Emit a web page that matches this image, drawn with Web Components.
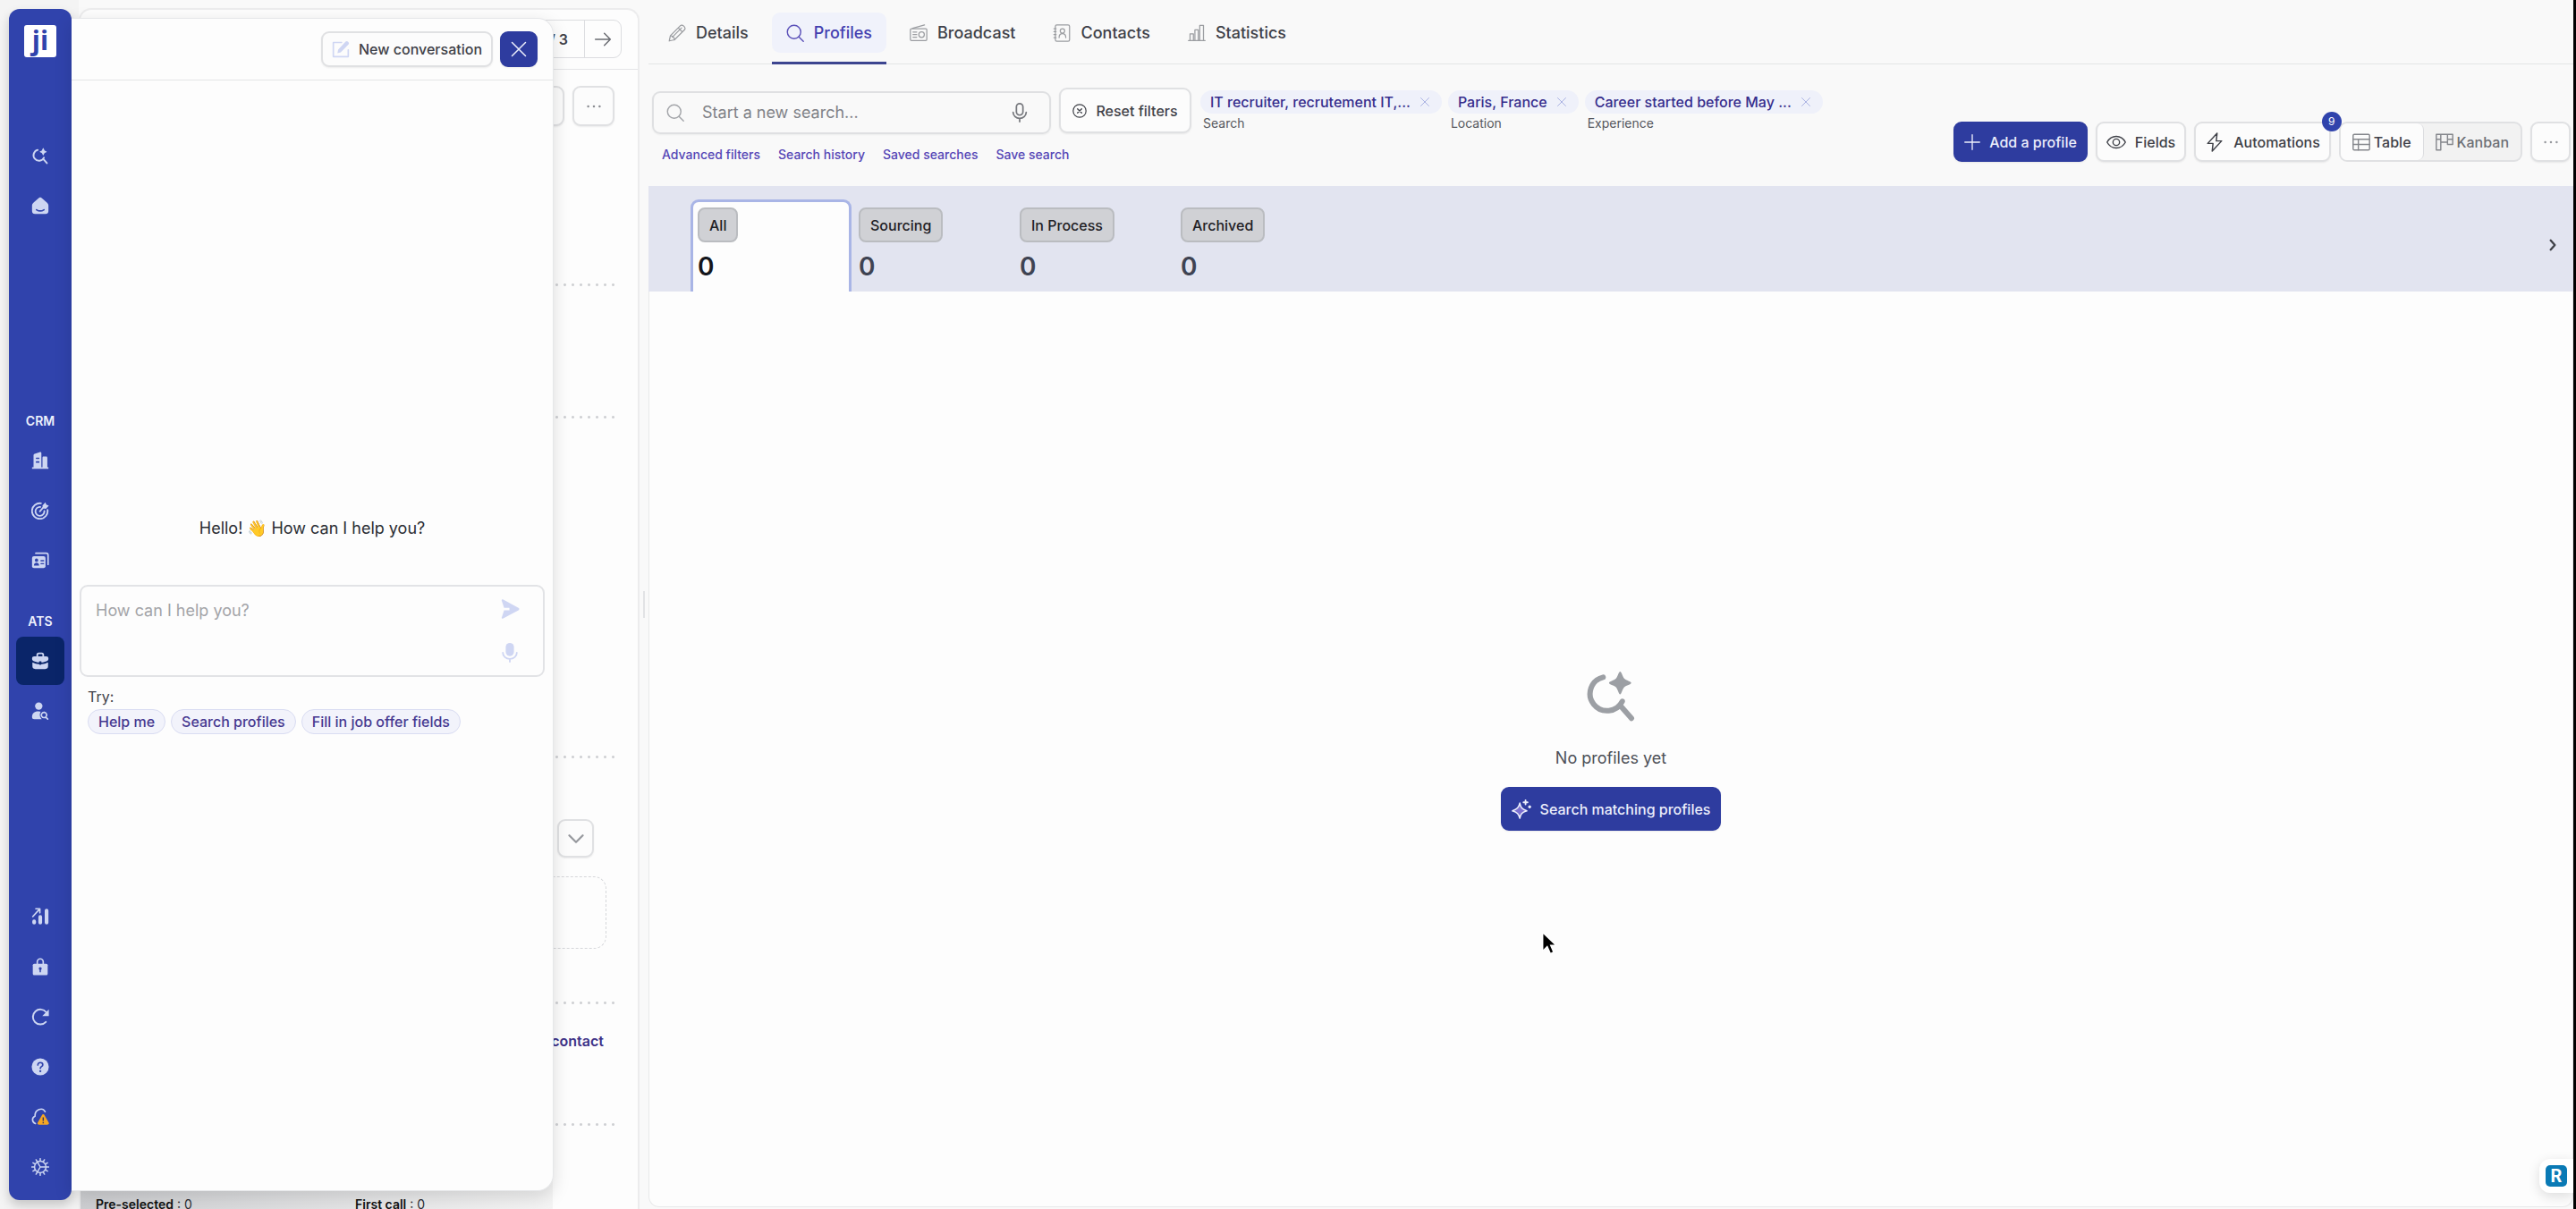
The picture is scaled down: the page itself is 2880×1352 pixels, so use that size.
<!DOCTYPE html>
<html lang="en">
<head>
<meta charset="utf-8">
<title>Profiles</title>
<style>
    body {
        margin: 0;
        font-family: Inter, "Liberation Sans", sans-serif;
        font-size: 16px;
        line-height: 20px;
        color: #3f4148;
        background: #f9f9f9;
    }
</style>
</head>
<body>
<app-shell>
    <app-sidebar slot="sidebar"></app-sidebar>
    <job-panel slot="job"></job-panel>
    <chat-panel slot="chat"></chat-panel>
    <profiles-page slot="page"></profiles-page>
</app-shell>

<script>
const stroke = 'fill="none" stroke="currentColor" stroke-linecap="round" stroke-linejoin="round"';

const ICONS = {
    'search-star': ['0 0 56 62', `
        <path ${stroke} stroke-width="6" d="M19.3 11.3A19 19 0 1 0 40.7 38.3M38.7 43.3L51 57.3"/>
        <path fill="currentColor" d="M38.3 5c1.6 0 2.6 5.5 4.6 7.8s7.8 3.2 7.8 4.9-5.6 2.6-7.8 4.8-3 7.9-4.6 7.9-2.5-5.6-4.6-7.9-7.8-3.1-7.8-4.8 5.7-2.6 7.8-4.9S36.7 5 38.3 5z"/>`],
    home: ['0 0 24 24', `
        <path fill="currentColor" d="M12 1c1 0 2 .6 3.4 1.9l5.2 4.6C22.2 9 23 10 23 12v7c0 3-1 4-4 4H5c-3 0-4-1-4-4v-7c0-2 .8-3 2.4-4.5l5.2-4.6C10 1.6 11 1 12 1z"/>
        <path ${stroke} style="stroke:#3043ac" stroke-width="2" d="M7 17.5c3 2 7 2 10 0"/>`],
    building: ['0 0 24 24', `
        <path fill="currentColor" d="M3 5c0-1 .5-1.5 1.5-2L11 .8c1.5-.5 2.5 0 2.5 1.5V21H15V8c0-1 .5-1.5 1.5-1.5h3C21 6.5 21.5 7 21.5 8.5V21H23v2H1v-2h2z"/>
        <path ${stroke} style="stroke:#3043ac" stroke-width="2" d="M7 9h3M7 14h3"/>`],
    target: ['0 0 24 24', `
        <path ${stroke} stroke-width="2.2" d="M13 2.2A10.5 10.5 0 1 0 21.8 11M12 7a6 6 0 1 0 5.5 5.5M11.5 13l6-7"/>
        <path fill="currentColor" d="M15 5l4-4 1 3 3.5 1.5-4 4L15.5 9z"/>`],
    cards: ['0 0 24 24', `
        <path ${stroke} stroke-width="2" d="M6 2h14a2.5 2.5 0 0 1 2.5 2.5V17"/>
        <rect x="1" y="6" width="18" height="16" rx="2.5" fill="currentColor"/>
        <path fill="#3043ac" d="M7 9a2 2 0 1 1 0 4.5A2 2 0 0 1 7 9zM3.5 18.5c0-5 7-5 7 0z"/>
        <path ${stroke} style="stroke:#3043ac" stroke-width="1.6" d="M13 12h3.5M13 16h3.5"/>`],
    briefcase: ['0 0 24 24', `
        <path ${stroke} stroke-width="2.2" d="M8 7V4c0-1.5.5-2 2-2h4c1.500 0 2 .5 2 2v3"/>
        <path fill="currentColor" d="M4 6h16c2 0 3 1 3 3 0 1.5-.4 2.5-2 3.2-2 .9-5 1.8-7.5 2v-1.7h-3v1.7c-2.500-.2-5.500-1.100-7.500-2C1.400 11.500 1 10.500 1 9c0-2 1-3 3-3z"/>
        <path fill="currentColor" d="M1.500 14c3 1.500 6 2.200 9 2.500 0 1.300 3 1.300 3 0 3-.3 6-1 9-2.500v5c0 2.500-1 4-4 4h-13c-3 0-4-1.500-4-4z"/>`],
    'person-search': ['0 0 24 24', `
        <circle cx="10" cy="5.5" r="5" fill="currentColor"/>
        <path fill="currentColor" d="M9 12.5c2 0 3 .3 3.5.6-1.5 2.4-1.5 6 .3 8.4L14 23H4c-2 0-3-1-3-3 0-4.5 3-7.5 8-7.5z"/>
        <path ${stroke} stroke-width="2" d="M17 14a3.5 3.5 0 1 0 .1 0M19.5 20.5L22 23"/>`],
    growth: ['0 0 24 24', `
        <path ${stroke} stroke-width="5" d="M3.8 18.5v1.5M12 12.5v7.5M20.5 4v16"/>
        <path ${stroke} stroke-width="2" d="M2 12L11 2M6 1.5h5.5V7"/>`],
    lock: ['0 0 24 24', `
        <path ${stroke} stroke-width="2" d="M8 9V5.5a4 4 0 0 1 8 0V9"/>
        <rect x="2" y="8" width="20" height="15.5" rx="2" fill="currentColor"/>
        <circle cx="12" cy="14.5" r="2" fill="#3043ac"/><path stroke="#3043ac" stroke-width="1.8" d="M12 15v4.5"/>`],
    refresh: ['0 0 24 24', `
        <path ${stroke} stroke-width="2.4" d="M19.5 19A10 10 0 1 1 20 6"/>
        <path fill="currentColor" d="M23.5 2v9h-8.8z"/>`],
    help: ['0 0 24 24', `
        <circle cx="12" cy="12" r="11.5" fill="currentColor"/>
        <path ${stroke} style="stroke:#3043ac" stroke-width="2" d="M8.8 9.5c0-4.5 6.6-4 6.6-.3 0 2.5-3.3 2.3-3.3 5"/>
        <circle cx="12.1" cy="17.8" r="1.4" fill="#3043ac"/>`],
    'cloud-alert': ['0 0 24 24', `
        <path ${stroke} stroke-width="2" d="M5.5 21C.5 19 .5 12.5 5 11 4.5 2 15-1.5 18.5 5"/>
        <path fill="#f5a623" d="M16 8.5c.8 0 1.3.4 1.8 1.3l5.5 9.7c1 1.8 0 3-1.8 3h-11c-1.8 0-2.8-1.2-1.8-3l5.5-9.7c.5-.9 1-1.3 1.8-1.3z"/>
        <path stroke="#3a3560" stroke-width="1.7" d="M16 12.5v5M16 19v1.7"/>`],
    gear: ['0 0 24 24', `
        <circle cx="12" cy="12" r="7.7" ${stroke} stroke-width="1.8"/>
        <path ${stroke} stroke-width="1.8" d="M12 .8v3M12 20.2v3M.8 12h3M20.2 12h3M6.4 2.3l1.5 2.6M16.1 19.1l1.5 2.6M2.3 6.4l2.6 1.5M19.1 16.1l2.6 1.5M2.3 17.6l2.6-1.5M19.1 7.9l2.6-1.5M6.4 21.7l1.5-2.6M16.1 4.9l1.5-2.6M12 12h7M12 12L8.5 5.9M12 12l-3.5 6.1"/>`],
    compose: ['0 0 24 24', `
        <path ${stroke} stroke-width="2" d="M13 3H2v19h20V13"/>
        <path fill="currentColor" d="M7.5 17.5l1-5L18.5 1.800c1-1 2-1 3 0l.8.9c.9 1 .9 2 0 3L12 16.2z"/>`],
    close: ['0 0 24 24', `<path ${stroke} stroke-width="1.8" d="M3 3l18 18M21 3L3 21"/>`],
    plus: ['0 0 24 24', `<path ${stroke} stroke-width="1.8" d="M12 1v22M1 12h22"/>`],
    'arrow-right': ['0 0 24 24', `<path ${stroke} stroke-width="1.8" d="M2 12h20M14 4l8 8-8 8"/>`],
    'chevron-down': ['0 0 24 24', `<path ${stroke} stroke-width="3" d="M2 7l10 10L22 7"/>`],
    'chevron-right': ['0 0 24 24', `<path ${stroke} stroke-width="4" d="M8 3l8 9-8 9"/>`],
    dots: ['0 0 24 24', `<g fill="currentColor"><circle cx="3.5" cy="12" r="1.7"/><circle cx="12" cy="12" r="1.7"/><circle cx="20.5" cy="12" r="1.7"/></g>`],
    send: ['0 0 24 24', `
        <path fill="currentColor" d="M2 1.5C2 .2 3 0 4 .5l18.5 10c1.3.7 1.3 2.3 0 3L4 23.5c-1 .5-2 .3-2-1L5 13.5h6.5v-3H5z"/>`],
    'mic-solid': ['0 0 24 24', `
        <rect x="7" y="0" width="10" height="16" rx="5" fill="currentColor"/>
        <path ${stroke} stroke-width="2" d="M3.5 12a8.5 7.5 0 0 0 17 0M12 19.5V23"/>`],
    mic: ['0 0 24 24', `
        <rect x="8" y="1" width="8" height="14" rx="4" ${stroke} stroke-width="1.9"/>
        <path ${stroke} stroke-width="1.9" d="M4 11.5a8 7.5 0 0 0 16 0M12 19v4"/>`],
    pencil: ['0 0 24 24', `
        <path ${stroke} stroke-width="1.5" d="M1.5 22.5l1.5-7L16.5 2c2.5-2.5 8 3 5.5 5.5L8.5 21zM3 15.5c3 0 5.5 2.5 5.5 5.5M5.5 17.5L18 5M13.5 5l5.5 5.5"/>`],
    search: ['0 0 24 24', `<circle cx="10.5" cy="10.5" r="9" ${stroke} stroke-width="1.7"/><path ${stroke} stroke-width="1.7" d="M17 17l6 6"/>`],
    radio: ['0 0 24 24', `
        <rect x="1" y="6" width="22" height="16" rx="1.5" ${stroke} stroke-width="1.5"/>
        <circle cx="16" cy="14" r="3.7" ${stroke} stroke-width="1.5"/>
        <path ${stroke} stroke-width="1.5" d="M4 5.5L20 1M4.5 10.5h5M4.5 14h5M4.5 17.5h5"/>`],
    contact: ['0 0 24 24', `
        <rect x="3.5" y="1" width="19" height="22" rx="2" ${stroke} stroke-width="1.5"/>
        <circle cx="13" cy="9" r="3" ${stroke} stroke-width="1.5"/>
        <path ${stroke} stroke-width="1.5" d="M8.5 18c0-7 9-7 9 0M1.5 6h3M1.5 10h3M1.5 14h3M1.5 18h3"/>`],
    bars: ['0 0 24 24', `<path ${stroke} stroke-width="1.5" d="M.8 22h22.4M3 22V13h4.5v9M9.5 22V7.5H14V22M16 22V1.5h5V22"/>`],
    reset: ['0 0 24 24', `<circle cx="12" cy="12" r="10.8" ${stroke} stroke-width="1.8"/><path ${stroke} stroke-width="2" d="M8.5 8.5l7 7M15.5 8.5l-7 7"/>`],
    eye: ['0 0 24 24', `<path ${stroke} stroke-width="1.5" d="M.8 12C6 2.5 18 2.5 23.2 12 18 21.5 6 21.5.8 12z"/><circle cx="12" cy="12" r="4" ${stroke} stroke-width="1.5"/>`],
    bolt: ['0 0 24 24', `<path ${stroke} stroke-width="1.6" d="M15 1L3.5 13.5H10L9 23l11.5-12.5H14z"/>`],
    table: ['0 0 24 24', `<rect x="1" y="1.5" width="22" height="21" rx="1.5" ${stroke} stroke-width="1.7"/><path ${stroke} stroke-width="1.7" d="M1 8h22M1 15h22M8 8v14.5"/>`],
    kanban: ['0 0 24 24', `<path ${stroke} stroke-width="1.7" d="M1 1.5h22V15h-7V1.5M1 1.5v21h6v-21M7 12h9M1 8h6M16 8h7"/>`],
    sparkles: ['0 0 24 24', `
        <path fill="#7b6fd0" stroke="currentColor" stroke-linejoin="round" stroke-width="1.7" d="M10 4.5c1 5.5 2.5 7 8.5 9.5-6 2-7.5 3.5-8.5 9-1.5-5.5-3-7-9-9 6-2.5 7.5-4 9-9.5z"/>
        <path ${stroke} stroke-width="2" d="M17 1v5M14.5 3.5h5M22 8v2M21 9h2"/>`],
    cursor: ['0 0 36 36', `<path fill="#000" stroke="#fff" stroke-width="2" d="M1 1v29l7-7 5 11 5-2.5L13.5 21H22z"/>`]
};

const CONTROLS = `
    button, input, textarea { font: inherit; color: inherit; box-sizing: border-box; }
    button { margin: 0; }
    a { color: inherit; text-decoration: none; }
`;

class UiIcon extends HTMLElement {
    constructor() {
        super();
        this.attachShadow({ mode: 'open' });
    }

    connectedCallback() {
        const [viewBox, shape] = ICONS[this.getAttribute('name')];
        const size = this.getAttribute('size') || '20';
        this.shadowRoot.innerHTML = `
            <style>
                :host { display: block; flex: none; }
                svg { display: block; }
            </style>
            <svg width="${size}" height="${size}" viewBox="${viewBox}" aria-hidden="true">${shape}</svg>
        `;
    }
}

class UiButton extends HTMLElement {
    constructor() {
        super();
        this.attachShadow({ mode: 'open' });
    }

    connectedCallback() {
        const label = this.getAttribute('label');
        this.shadowRoot.innerHTML = `
            <style>
                ${CONTROLS}
                :host { display: block; flex: none; height: 45px; }
                button {
                    display: flex;
                    align-items: center;
                    justify-content: center;
                    gap: 10px;
                    width: 100%;
                    height: 100%;
                    padding: 0 10px;
                    border: 2px solid #e0e1e3;
                    border-radius: 9px;
                    background: #fcfcfc;
                    box-shadow: 0 1px 2px #00000012;
                    font-weight: 500;
                    white-space: nowrap;
                }
                :host([square]) button { padding: 0; }
                :host([primary]) button {
                    background: #2e3c9f;
                    border-color: #2e3c9f;
                    color: #eceefb;
                }
            </style>
            <button type="button" ${label ? `aria-label="${label}"` : ''}><slot></slot></button>
        `;
    }
}

class AppShell extends HTMLElement {
    constructor() {
        super();
        this.attachShadow({ mode: 'open' });
        this.shadowRoot.innerHTML = `
            <style>
                :host {
                    display: flex;
                    position: relative;
                    box-sizing: border-box;
                    height: 100vh;
                    overflow: hidden;
                    border-right: 3px solid #000;
                }
                .rail { display: flex; padding: 10px 8px 10px 10px; background: #f4f4f4; }
                .handle {
                    flex: none;
                    display: flex;
                    align-items: center;
                    justify-content: center;
                    width: 10px;
                }
                .handle span { width: 2px; height: 30px; background: #e2e3e5; }
            </style>
            <div class="rail"><slot name="sidebar"></slot></div>
            <slot name="job"></slot>
            <slot name="chat"></slot>
            <div class="handle" role="separator"><span></span></div>
            <slot name="page"></slot>
        `;
    }
}

class AppSidebar extends HTMLElement {
    constructor() {
        super();
        this.attachShadow({ mode: 'open' });
    }

    connectedCallback() {
        const link = (icon, label, active) => `
            <a href="#" aria-label="${label}" ${active ? 'class="active"' : ''}><ui-icon name="${icon}"></ui-icon></a>`;
        this.shadowRoot.innerHTML = `
            <style>
                ${CONTROLS}
                :host {
                    display: flex;
                    flex-direction: column;
                    box-sizing: border-box;
                    width: 70px;
                    padding: 18px 8px 10px;
                    border-radius: 12px;
                    background: #3043ac;
                    color: #cdd6f2;
                    box-shadow: 0 6px 12px #00000030;
                }
                .logo {
                    align-self: center;
                    width: 36px;
                    height: 36px;
                    border-radius: 3px;
                    background: #fff;
                    color: #3043ac;
                    font: bold 30px/34px "Open Sans", sans-serif;
                    text-align: center;
                }
                nav { display: flex; flex: none; flex-direction: column; gap: 2px; }
                a {
                    display: flex;
                    align-items: center;
                    justify-content: center;
                    height: 54px;
                    border-radius: 8px;
                }
                .active { background: #0a2569; }
                h2 {
                    margin: 0;
                    color: #eef1fc;
                    font-size: 14px;
                    line-height: 30px;
                    font-weight: 600;
                    text-align: center;
                }
                .top { margin-top: 83px; }
                .crm { margin-top: 199px; }
                .ats { margin-top: 26px; }
                .bottom { margin-top: auto; }
            </style>
            <div class="logo">ji</div>
            <nav class="top">
                ${link('search-star', 'Search')}
                ${link('home', 'Home')}
            </nav>
            <nav class="crm">
                <h2>CRM</h2>
                ${link('building', 'Companies')}
                ${link('target', 'Opportunities')}
                ${link('cards', 'Contacts')}
            </nav>
            <nav class="ats">
                <h2>ATS</h2>
                ${link('briefcase', 'Jobs', true)}
                ${link('person-search', 'Candidates')}
            </nav>
            <nav class="bottom">
                ${link('growth', 'Reports')}
                ${link('lock', 'Security')}
                ${link('refresh', 'Refresh')}
                ${link('help', 'Help')}
                ${link('cloud-alert', 'Sync status')}
                ${link('gear', 'Settings')}
            </nav>
        `;
    }
}

class JobPanel extends HTMLElement {
    constructor() {
        super();
        this.attachShadow({ mode: 'open' });
        this.shadowRoot.innerHTML = `
            <style>
                ${CONTROLS}
                :host { display: block; flex: none; width: 627px; padding-top: 9px; }
                .card {
                    display: flex;
                    flex-direction: column;
                    align-items: flex-end;
                    box-sizing: border-box;
                    height: 100%;
                    border: 2px solid #ececed;
                    border-bottom: 0;
                    border-radius: 14px 14px 0 0;
                    background: #fdfdfd;
                }
                header {
                    display: flex;
                    justify-content: flex-end;
                    box-sizing: border-box;
                    width: 100%;
                    height: 67px;
                    padding: 11px 18px;
                    border-bottom: 1px solid #e4e5e7;
                }
                .pager {
                    display: flex;
                    align-items: center;
                    box-sizing: border-box;
                    height: 43px;
                    border: 1px solid #dcdde0;
                    border-radius: 9px;
                    padding-left: 24px;
                    font-weight: 600;
                }
                .pager button {
                    display: flex;
                    align-items: center;
                    justify-content: center;
                    width: 41px;
                    height: 100%;
                    margin-left: 18px;
                    border: 0;
                    border-left: 1px solid #dcdde0;
                    padding: 0;
                    background: none;
                    color: #6a6c72;
                }
                .tools { display: flex; gap: 9px; padding: 18px 26px 0; color: #8b8d92; }
                .tools ui-button { width: 47px; }
                hr {
                    width: 540px;
                    height: 3px;
                    margin: 0 23px;
                    border: 0;
                    background: radial-gradient(circle at center, #d0d1d4 1px, #d9dadd00 2px) right / 9px 3px repeat-x;
                }
                .gap-l { margin-top: 176px; }
                .gap-m { margin-top: 145px; }
                .gap-xl { margin-top: 377px; }
                .more { width: 41px; height: 43px; margin: 68px 49px 0; color: #97999e; }
                .drop {
                    box-sizing: border-box;
                    width: 540px;
                    height: 81px;
                    margin: 21px 35px 59px;
                    border: 1px dashed #d6d7da;
                    border-radius: 14px;
                }
                a { margin: 31px 38px 82px; color: #3d3187; font-weight: 600; }
                footer {
                    display: grid;
                    grid-template-columns: 290px 1fr;
                    align-self: flex-start;
                    box-sizing: border-box;
                    width: 528px;
                    margin-top: auto;
                    padding: 30px 16px 0 17px;
                    height: 43px;
                    background: linear-gradient(90deg, #cdced1, #f4f4f4);
                    color: #2b2d33;
                    font-size: 14px;
                    line-height: 16px;
                }
                b { font-weight: 600; color: #111; }
            </style>
            <div class="card">
                <header>
                    <div class="pager">/ 3<button type="button" aria-label="Next job"><ui-icon name="arrow-right"></ui-icon></button></div>
                </header>
                <div class="tools">
                    <ui-button square label="Edit"></ui-button>
                    <ui-button square label="More"><ui-icon name="dots" size="18"></ui-icon></ui-button>
                </div>
                <hr class="gap-l">
                <hr class="gap-m">
                <hr class="gap-xl">
                <ui-button class="more" square label="Expand"><ui-icon name="chevron-down" size="18"></ui-icon></ui-button>
                <div class="drop"></div>
                <hr>
                <a href="#">contact</a>
                <hr>
                <footer>
                    <span><b>Pre-selected</b> : 0</span>
                    <span><b>First call</b> : 0</span>
                </footer>
            </div>
        `;
    }
}

class ChatPanel extends HTMLElement {
    constructor() {
        super();
        this.attachShadow({ mode: 'open' });
        this.shadowRoot.innerHTML = `
            <style>
                ${CONTROLS}
                /* drawer laid over the job card */
                :host {
                    position: absolute;
                    left: 80px;
                    top: 20px;
                    bottom: 20px;
                    display: flex;
                    flex-direction: column;
                    box-sizing: border-box;
                    width: 539px;
                    border: 1px solid #e6e7e9;
                    border-left: 0;
                    border-radius: 0 18px 18px 0;
                    background: #fdfdfd;
                    box-shadow: 0 6px 20px #00000022;
                }
                header {
                    display: flex;
                    justify-content: flex-end;
                    gap: 8px;
                    padding: 14px 17px;
                    border-bottom: 1px solid #e4e5e7;
                }
                header ui-button { height: 40px; }
                .new ui-icon { color: #cfd6f3; }
                .x { width: 42px; }
                .body { display: flex; flex-direction: column; padding: 490px 9px 0; }
                .hello { margin: 0 0 52px; color: #2b2d33; font-size: 18px; line-height: 22px; text-align: center; }
                .box {
                    display: flex;
                    box-sizing: border-box;
                    height: 103px;
                    padding: 14px 26px 14px 16px;
                    border: 2px solid #e2e3e6;
                    border-radius: 9px;
                }
                textarea {
                    flex: 1;
                    padding: 0;
                    border: 0;
                    outline: 0;
                    resize: none;
                    background: none;
                    font-size: 18px;
                    line-height: 26px;
                }
                textarea::placeholder { color: #a3a4a8; opacity: 1; }
                .side { display: flex; flex-direction: column; justify-content: space-between; color: #cfd6f3; }
                .side button { border: 0; padding: 0; background: none; }
                .try { margin: 12px 9px 4px; }
                .chips { display: flex; gap: 6px; padding: 0 9px; }
                .chips button {
                    height: 28px;
                    padding: 0 11px;
                    border: 1px solid #d9dcf2;
                    border-radius: 14px;
                    background: #f2f3fb;
                    color: #453890;
                    font-weight: 500;
                }
            </style>
            <header>
                <ui-button class="new"><ui-icon name="compose"></ui-icon>New conversation</ui-button>
                <ui-button class="x" primary square label="Close"><ui-icon name="close"></ui-icon></ui-button>
            </header>
            <div class="body">
                <p class="hello">Hello! 👋 How can I help you?</p>
                <div class="box">
                    <textarea aria-label="Message" placeholder="How can I help you?"></textarea>
                    <div class="side">
                        <button type="button" aria-label="Send"><ui-icon name="send" size="22"></ui-icon></button>
                        <button type="button" aria-label="Dictate"><ui-icon name="mic-solid" size="22"></ui-icon></button>
                    </div>
                </div>
                <div class="try">Try:</div>
                <div class="chips">
                    <button type="button">Help me</button>
                    <button type="button">Search profiles</button>
                    <button type="button">Fill in job offer fields</button>
                </div>
            </div>
        `;
    }
}

class PageTab extends HTMLElement {
    constructor() {
        super();
        this.attachShadow({ mode: 'open' });
    }

    connectedCallback() {
        this.shadowRoot.innerHTML = `
            <style>
                ${CONTROLS}
                :host {
                    display: block;
                    padding-bottom: 10px;
                    border-bottom: 3px solid transparent;
                }
                a {
                    display: flex;
                    align-items: center;
                    gap: 11px;
                    height: 45px;
                    padding: 0 16px;
                    border-radius: 9px;
                    font-size: 18px;
                    font-weight: 500;
                }
                ui-icon { color: #9b9da1; }
                :host([active]) { border-color: #3d4590; }
                :host([active]) a { background: #f0f2fb; color: #4440b0; }
                :host([active]) ui-icon { color: #5a50b8; }
            </style>
            <a href="#"><ui-icon name="${this.getAttribute('icon')}"></ui-icon><slot></slot></a>
        `;
    }
}

class FilterTag extends HTMLElement {
    constructor() {
        super();
        this.attachShadow({ mode: 'open' });
    }

    connectedCallback() {
        this.shadowRoot.innerHTML = `
            <style>
                ${CONTROLS}
                :host { display: block; flex: none; }
                .tag {
                    display: flex;
                    align-items: center;
                    gap: 10px;
                    height: 26px;
                    padding: 0 13px 0 11px;
                    border-radius: 13px;
                    background: #eff1fa;
                    color: #352c8c;
                    font-weight: 500;
                }
                button { border: 0; padding: 0; background: none; color: #a3abe0; }
                small { display: block; padding-left: 3px; font-size: 14px; line-height: 22px; color: #55575d; }
            </style>
            <div class="tag"><slot></slot><button type="button" aria-label="Remove"><ui-icon name="close" size="12"></ui-icon></button></div>
            <small>${this.getAttribute('kind')}</small>
        `;
    }
}

class StageTab extends HTMLElement {
    constructor() {
        super();
        this.attachShadow({ mode: 'open' });
    }

    connectedCallback() {
        this.shadowRoot.innerHTML = `
            <style>
                ${CONTROLS}
                :host {
                    display: block;
                    box-sizing: border-box;
                    width: 180px;
                    padding: 6px 5px 12px;
                    border: 3px solid transparent;
                    border-bottom: 0;
                    border-radius: 9px 9px 0 0;
                }
                :host([active]) { background: #fdfdfd; border-color: #a9b5e6; }
                button {
                    display: block;
                    height: 39px;
                    padding: 0 11px;
                    border: 2px solid #babcc0;
                    border-radius: 8px;
                    background: #d0d1d5;
                    color: #1f2126;
                    font-weight: 500;
                }
                output {
                    display: block;
                    margin-top: 11px;
                    color: #3f4352;
                    font-size: 28px;
                    line-height: 32px;
                    font-weight: 600;
                }
                :host([active]) output { color: #14161c; }
            </style>
            <button type="button"><slot></slot></button>
            <output>${this.getAttribute('count')}</output>
        `;
    }
}

class ProfilesPage extends HTMLElement {
    constructor() {
        super();
        this.attachShadow({ mode: 'open' });
        this.shadowRoot.innerHTML = `
            <style>
                ${CONTROLS}
                :host {
                    display: flex;
                    flex: 1;
                    flex-direction: column;
                    min-width: 0;
                    position: relative;
                }
                .tabs {
                    display: flex;
                    gap: 10px;
                    padding: 14px 6px 0;
                    box-shadow: inset 0 -1px #e4e5e6;
                }
                .toolbar { display: flex; align-items: flex-start; padding: 26px 3px 25px 4px; }
                .search { width: 446px; margin: 4px 9px 0 0; }
                .field {
                    display: flex;
                    align-items: center;
                    box-sizing: border-box;
                    height: 48px;
                    padding: 0 22px 0 14px;
                    border: 2px solid #dfe0e2;
                    border-radius: 9px;
                    color: #77797e;
                    box-shadow: 0 1px 2px #0000000d;
                }
                .field > ui-icon { color: #a3a5a9; }
                .field button { border: 0; padding: 0; background: none; }
                input {
                    flex: 1;
                    min-width: 0;
                    padding: 0 0 0 20px;
                    border: 0;
                    outline: 0;
                    background: none;
                    font-size: 18px;
                }
                input::placeholder { color: #808287; opacity: 1; }
                .links {
                    display: flex;
                    gap: 20px;
                    padding: 13px 11px 0;
                    color: #5546b6;
                    font-size: 14px;
                    font-weight: 500;
                    white-space: nowrap;
                }
                .reset { width: 148px; height: 51px; margin-right: 10px; }
                .tags { display: flex; gap: 7px; margin-top: 3px; }
                .actions { display: flex; gap: 9px; margin: 38px 0 0 auto; }
                .auto { position: relative; }
                .badge {
                    position: absolute;
                    top: -11px;
                    right: -12px;
                    width: 22px;
                    border-radius: 11px;
                    background: #3043ac;
                    color: #fff;
                    font-size: 12px;
                    line-height: 22px;
                    text-align: center;
                }
                .view {
                    display: flex;
                    box-sizing: border-box;
                    height: 45px;
                    border: 2px solid #e0e1e3;
                    border-radius: 9px;
                    background: #f2f2f2;
                }
                .view button {
                    display: flex;
                    align-items: center;
                    gap: 4px;
                    padding: 0 13px;
                    border: 0;
                    background: none;
                    color: #6d6f75;
                    font-weight: 500;
                }
                .view .on {
                    border-right: 1px solid #dcdde0;
                    border-radius: 7px;
                    background: #fcfcfc;
                    color: #3f4148;
                }
                .view ui-icon { color: #85878c; }
                .more { width: 45px; color: #97999e; }
                .stages { display: flex; padding: 15px 16px 0 47px; background: #e2e4f0; }
                .next { margin: 36px 0 0 auto; border: 0; padding: 0; height: 30px; background: none; }
                .empty {
                    display: flex;
                    flex: 1;
                    flex-direction: column;
                    align-items: center;
                    justify-content: center;
                    margin-bottom: 2px;
                    border: 1px solid #e8e9ea;
                    border-top: 0;
                    border-radius: 0 0 12px 12px;
                    background: #fdfdfd;
                    color: #4d5057;
                    font-size: 18px;
                }
                .empty > ui-icon { color: #9c9fa4; }
                .empty p { margin: 28px 0 20px; line-height: 24px; }
                .empty ui-button { height: 49px; font-size: 16px; }
                .widget {
                    position: absolute;
                    right: 0;
                    bottom: 18px;
                    padding: 7px;
                    border-radius: 12px 0 0 12px;
                    background: #fff;
                    box-shadow: 0 4px 14px #00000022;
                }
                .widget span {
                    display: block;
                    width: 24px;
                    border-radius: 5px;
                    background: #0a7ab5;
                    color: #fff;
                    font: bold 20px/24px Roboto, sans-serif;
                    text-align: center;
                }
                .cursor { position: absolute; left: 999px; top: 1042px; }
            </style>
            <nav class="tabs">
                <page-tab icon="pencil">Details</page-tab>
                <page-tab icon="search" active>Profiles</page-tab>
                <page-tab icon="radio">Broadcast</page-tab>
                <page-tab icon="contact">Contacts</page-tab>
                <page-tab icon="bars">Statistics</page-tab>
            </nav>
            <div class="toolbar">
                <div class="search">
                    <div class="field">
                        <ui-icon name="search"></ui-icon>
                        <input type="text" aria-label="Search" placeholder="Start a new search...">
                        <button type="button" aria-label="Dictate"><ui-icon name="mic" size="22"></ui-icon></button>
                    </div>
                    <div class="links">
                        <a href="#">Advanced filters</a>
                        <a href="#">Search history</a>
                        <a href="#">Saved searches</a>
                        <a href="#">Save search</a>
                    </div>
                </div>
                <ui-button class="reset"><ui-icon name="reset" size="16"></ui-icon>Reset filters</ui-button>
                <div class="tags">
                    <filter-tag kind="Search">IT recruiter, recrutement IT,...</filter-tag>
                    <filter-tag kind="Location">Paris, France</filter-tag>
                    <filter-tag kind="Experience">Career started before May ...</filter-tag>
                </div>
                <div class="actions">
                    <ui-button primary><ui-icon name="plus" size="18"></ui-icon>Add a profile</ui-button>
                    <ui-button><ui-icon name="eye" size="22"></ui-icon>Fields</ui-button>
                    <div class="auto">
                        <ui-button><ui-icon name="bolt" size="22"></ui-icon>Automations</ui-button>
                        <span class="badge">9</span>
                    </div>
                    <div class="view">
                        <button type="button" class="on"><ui-icon name="table"></ui-icon>Table</button>
                        <button type="button"><ui-icon name="kanban"></ui-icon>Kanban</button>
                    </div>
                    <ui-button class="more" square label="More"><ui-icon name="dots" size="18"></ui-icon></ui-button>
                </div>
            </div>
            <div class="stages">
                <stage-tab count="0" active>All</stage-tab>
                <stage-tab count="0">Sourcing</stage-tab>
                <stage-tab count="0">In Process</stage-tab>
                <stage-tab count="0">Archived</stage-tab>
                <button type="button" class="next" aria-label="Next stages"><ui-icon name="chevron-right" size="14"></ui-icon></button>
            </div>
            <div class="empty">
                <ui-icon name="search-star" size="62"></ui-icon>
                <p>No profiles yet</p>
                <ui-button primary><ui-icon name="sparkles" size="22"></ui-icon>Search matching profiles</ui-button>
            </div>
            <div class="widget"><span>R</span></div>
            <ui-icon class="cursor" name="cursor" size="26"></ui-icon>
        `;
    }
}

customElements.define('ui-icon', UiIcon);
customElements.define('ui-button', UiButton);
customElements.define('app-shell', AppShell);
customElements.define('app-sidebar', AppSidebar);
customElements.define('job-panel', JobPanel);
customElements.define('chat-panel', ChatPanel);
customElements.define('page-tab', PageTab);
customElements.define('filter-tag', FilterTag);
customElements.define('stage-tab', StageTab);
customElements.define('profiles-page', ProfilesPage);
</script>
</body>
</html>
